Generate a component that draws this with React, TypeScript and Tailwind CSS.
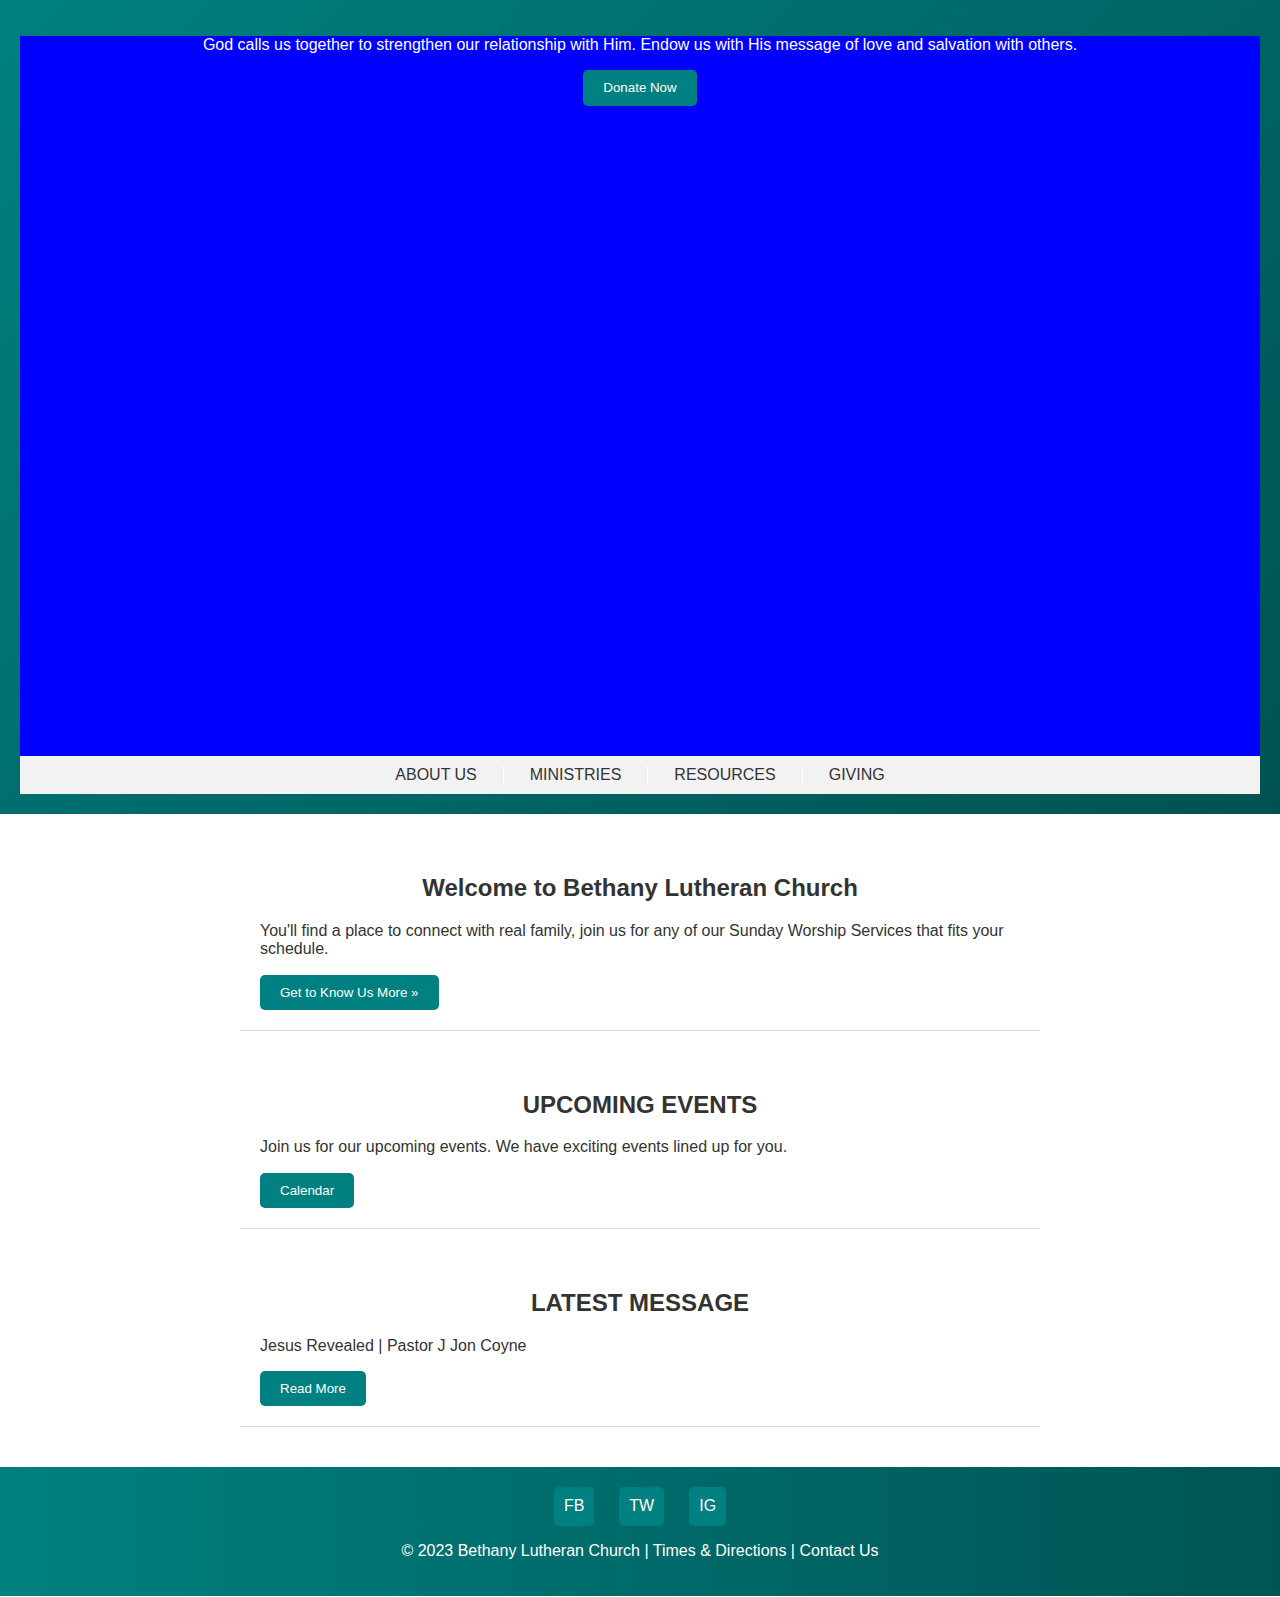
const navItems = ["About Us", "Ministries", "Resources", "Giving"];

const sections = [
  {
    title: "Welcome to Bethany Lutheran Church",
    text: "You'll find a place to connect with real family, join us for any of our Sunday Worship Services that fits your schedule.",
    cta: "Get to Know Us More »",
  },
  {
    title: "UPCOMING EVENTS",
    text: "Join us for our upcoming events. We have exciting events lined up for you.",
    cta: "Calendar",
  },
  {
    title: "LATEST MESSAGE",
    text: "Jesus Revealed | Pastor J Jon Coyne",
    cta: "Read More",
  },
];

function TealButton({ label }: { label: string }) {
  return (
    <button className="bg-[#008080] text-white text-[13.333px] leading-[15.33px] px-5 py-2.5 rounded-[5px] cursor-pointer">
      {label}
    </button>
  );
}

export default function App() {
  return (
    <div className="font-['Liberation_Sans',Arial,sans-serif] leading-[18.4px] text-[#333] bg-white">
      {/* Header / hero */}
      <header className="bg-[linear-gradient(135deg,#008080,#005252)] px-5 pt-9 pb-5">
        <div className="h-[720px] bg-[#0000ff] text-center">
          <p className="text-white text-base leading-[18.4px] mb-4">
            God calls us together to strengthen our relationship with Him. Endow us with His message of love and
            salvation with others.
          </p>
          <TealButton label="Donate Now" />
        </div>
        <nav className="bg-[#f2f2f2] py-2.5">
          <ul className="flex justify-center">
            {navItems.map((item, i) => (
              <li
                key={item}
                className={`px-[26px] uppercase text-base leading-[18.4px] text-[#333] ${
                  i < navItems.length - 1 ? "border-r border-white" : ""
                }`}
              >
                {item}
              </li>
            ))}
          </ul>
        </nav>
      </header>

      {/* Content */}
      <main className="max-w-[800px] mx-auto py-5">
        {sections.map((s) => (
          <section key={s.title} className="p-5 mb-5 border-b border-[#ddd]">
            <h2 className="text-2xl leading-[27.6px] font-bold text-center my-[19.92px]">{s.title}</h2>
            <p className="text-base leading-[18.4px] mt-[19.92px] mb-4">{s.text}</p>
            <TealButton label={s.cta} />
          </section>
        ))}
      </main>

      {/* Footer */}
      <footer className="bg-[linear-gradient(to_right,#008080,#005454)] text-white text-center p-5">
        <div className="flex justify-center gap-[25px]">
          {["FB", "TW", "IG"].map((s) => (
            <span key={s} className="bg-[#008080] text-white text-base leading-[18.4px] p-2.5 rounded-[5px]">
              {s}
            </span>
          ))}
        </div>
        <p className="my-4 text-base leading-[18.4px]">
          © 2023 Bethany Lutheran Church | Times &amp; Directions | Contact Us
        </p>
      </footer>
    </div>
  );
}
